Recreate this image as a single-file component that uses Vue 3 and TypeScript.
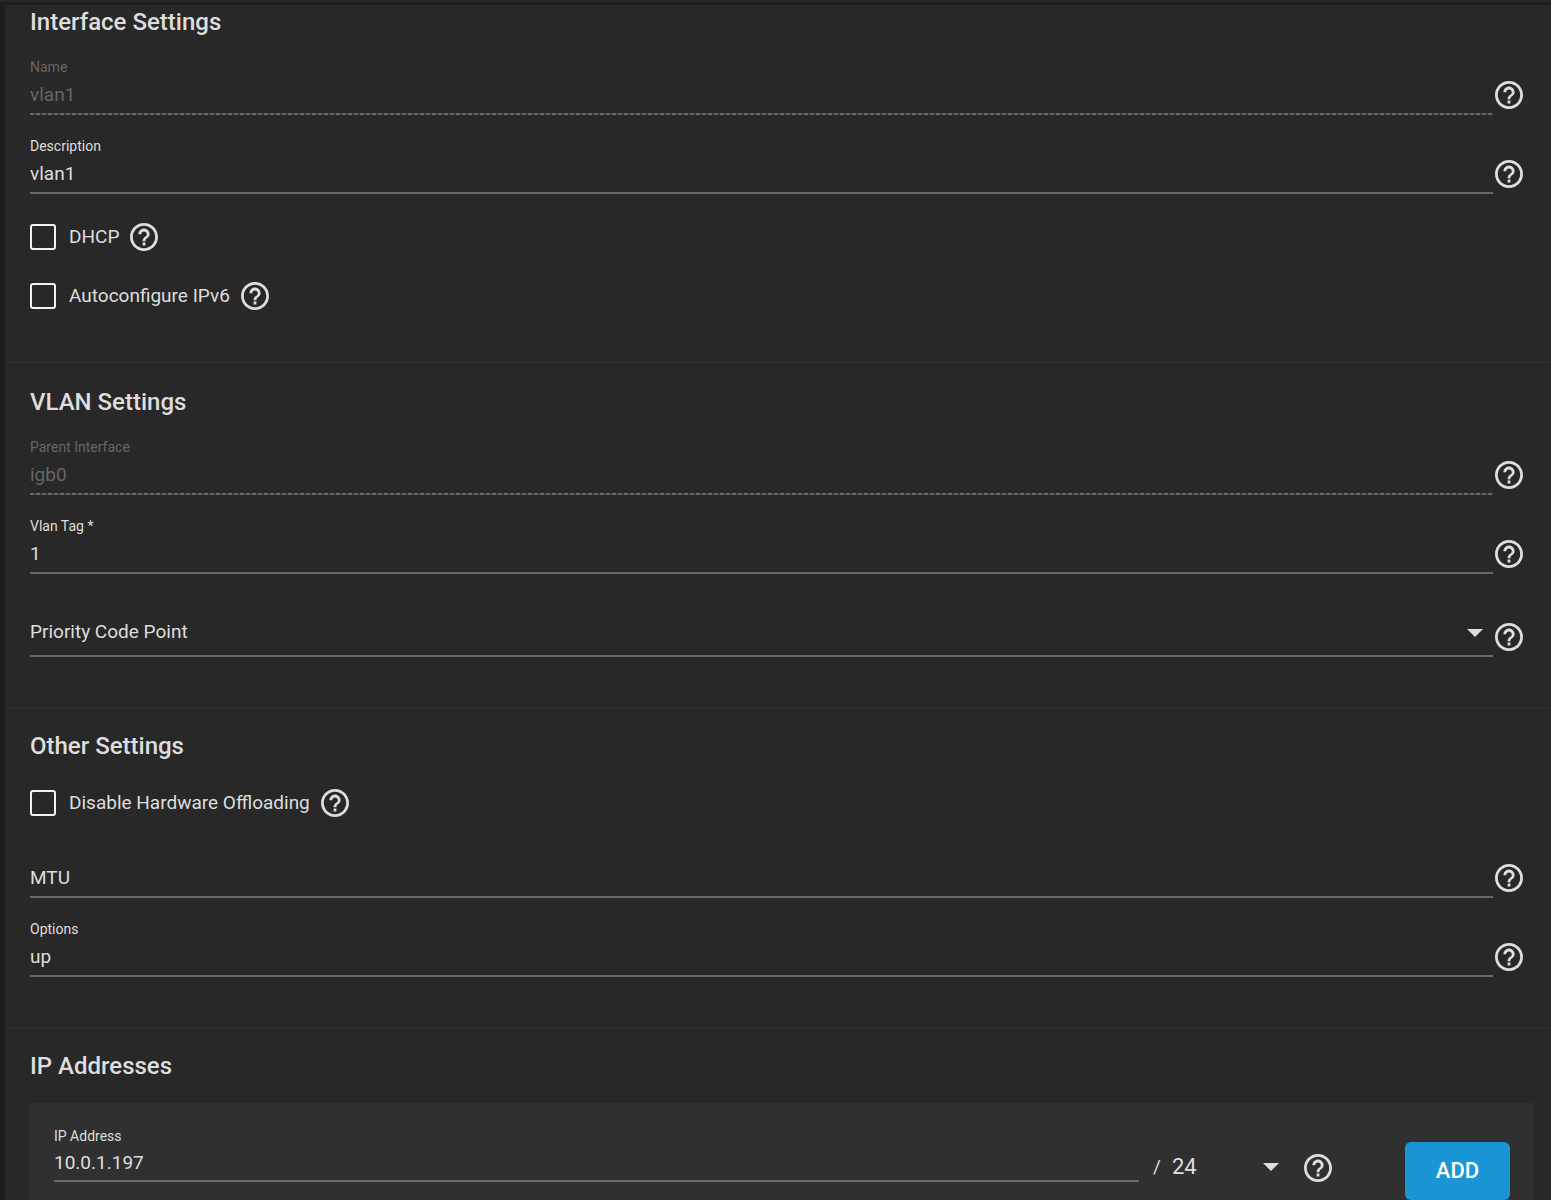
<script setup lang="ts">
import { defineComponent, h, reactive } from 'vue'

const HelpIcon = defineComponent({
  setup() {
    return () =>
      h('button', { type: 'button', class: 'help', 'aria-label': 'Help' }, [
        h('svg', { viewBox: '2 2 20 20', 'aria-hidden': 'true' }, [
          h('path', {
            d: 'M11 18h2v-2h-2v2zm1-16C6.48 2 2 6.48 2 12s4.48 10 10 10 10-4.48 10-10S17.52 2 12 2zm0 18c-4.41 0-8-3.59-8-8s3.59-8 8-8 8 3.59 8 8-3.59 8-8 8zm0-14c-2.21 0-4 1.79-4 4h2c0-1.1.9-2 2-2s2 .9 2 2c0 2-3 1.75-3 5h2c0-2.25 3-2.5 3-5 0-2.21-1.79-4-4-4z',
          }),
        ]),
      ])
  },
})

const form = reactive({
  name: 'vlan1',
  description: 'vlan1',
  dhcp: false,
  autoconf: false,
  parent: 'igb0',
  tag: '1',
  pcp: '',
  offload: false,
  mtu: '',
  options: 'up',
  address: '10.0.1.197',
  netmask: '24',
})

const netmasks: string[] = Array.from({ length: 32 }, (_, i) => String(i + 1))
const priorities: string[] = ['Best effort', 'Background', 'Excellent effort', 'Critical applications']
</script>

<template>
  <form class="page" @submit.prevent>
    <div class="panel">
      <section class="first">
        <h2>Interface Settings</h2>
        <div class="row">
          <div class="field disabled">
            <label for="name">Name</label>
            <input id="name" v-model="form.name" type="text" disabled />
          </div>
          <HelpIcon />
        </div>
        <div class="row">
          <div class="field">
            <label for="description">Description</label>
            <input id="description" v-model="form.description" type="text" />
          </div>
          <HelpIcon />
        </div>
        <div class="check">
          <label><input v-model="form.dhcp" type="checkbox" />DHCP</label>
          <HelpIcon />
        </div>
        <div class="check">
          <label><input v-model="form.autoconf" type="checkbox" />Autoconfigure IPv6</label>
          <HelpIcon />
        </div>
      </section>

      <section class="vlan">
        <h2>VLAN Settings</h2>
        <div class="row">
          <div class="field disabled">
            <label for="parent">Parent Interface</label>
            <input id="parent" v-model="form.parent" type="text" disabled />
          </div>
          <HelpIcon />
        </div>
        <div class="row">
          <div class="field">
            <label for="tag">Vlan Tag *</label>
            <input id="tag" v-model="form.tag" type="text" required />
          </div>
          <HelpIcon />
        </div>
        <div class="row">
          <div class="field choice">
            <select id="pcp" v-model="form.pcp" aria-label="Priority Code Point">
              <option value="">Priority Code Point</option>
              <option v-for="p in priorities" :key="p" :value="p">{{ p }}</option>
            </select>
            <svg class="arrow" viewBox="0 0 16 8" aria-hidden="true"><path d="M0 0h16L8 8z" /></svg>
          </div>
          <HelpIcon />
        </div>
      </section>

      <section>
        <h2>Other Settings</h2>
        <div class="check">
          <label><input v-model="form.offload" type="checkbox" />Disable Hardware Offloading</label>
          <HelpIcon />
        </div>
        <div class="row">
          <div class="field bare">
            <input id="mtu" v-model="form.mtu" type="text" placeholder="MTU" aria-label="MTU" />
          </div>
          <HelpIcon />
        </div>
        <div class="row">
          <div class="field">
            <label for="options">Options</label>
            <input id="options" v-model="form.options" type="text" />
          </div>
          <HelpIcon />
        </div>
      </section>

      <section class="addresses">
        <h2>IP Addresses</h2>
        <div class="box">
          <div class="field address">
            <label for="address">IP Address</label>
            <input id="address" v-model="form.address" type="text" />
          </div>
          <span class="slash">/</span>
          <div class="mask">
            <select v-model="form.netmask" aria-label="Netmask">
              <option v-for="n in netmasks" :key="n" :value="n">{{ n }}</option>
            </select>
            <svg class="arrow" viewBox="0 0 16 8" aria-hidden="true"><path d="M0 0h16L8 8z" /></svg>
          </div>
          <HelpIcon />
          <button type="button" class="add">ADD</button>
        </div>
      </section>
    </div>
  </form>
</template>

<style>
body {
  margin: 0;
  background: #1e1e1e;
}
</style>

<style scoped>
.page {
  box-sizing: border-box;
  min-height: 100vh;
  padding: 3px 0 0 5px;
  border-top: 2px solid #282828;
  background: #1e1e1e;
  color: #dedede;
  font: 19px/28px Roboto, sans-serif;
}
.page * {
  box-sizing: border-box;
}
.panel {
  background: #282828;
}
section {
  padding: 23px 28px 51px 25px;
  border-bottom: 1px solid #323232;
}
.first {
  padding-top: 3px;
  padding-bottom: 50px;
}
.vlan {
  padding-top: 25px;
}
.addresses {
  padding-right: 18px;
  padding-bottom: 0;
  border: 0;
}
h2 {
  margin: 0;
  font-size: 24px;
  line-height: 28px;
  font-weight: 500;
}
.row {
  display: flex;
  align-items: flex-end;
  gap: 2px;
}
.field {
  display: flex;
  flex: 1;
  flex-direction: column;
  gap: 5px;
  padding: 22px 0 4px;
  border-bottom: 2px solid #686868;
}
.field label {
  font-size: 14px;
  line-height: 18px;
}
input[type='text'],
select {
  display: block;
  width: 100%;
  height: 28px;
  margin: 0;
  padding: 0;
  border: 0;
  border-radius: 0;
  outline: 0;
  background: transparent;
  color: inherit;
  font: inherit;
  appearance: none;
}
input::placeholder {
  color: inherit;
  opacity: 1;
}
.disabled {
  padding-bottom: 6px;
  background: repeating-linear-gradient(90deg, #686868 0 4px, #3c3c3c 4px 6px) bottom / 100% 2px no-repeat;
  border-bottom: 0;
  color: #666;
}
.bare {
  padding-top: 45px;
}
.choice {
  position: relative;
  padding: 44px 0 9px;
}
.arrow {
  flex: none;
  width: 16px;
  height: 8px;
  fill: #dedede;
  pointer-events: none;
}
.choice .arrow {
  position: absolute;
  right: 10px;
  bottom: 18px;
}
:deep(.help) {
  display: block;
  flex: none;
  width: 28px;
  height: 28px;
  margin: 0;
  padding: 0;
  border: 0;
  background: none;
}
.row :deep(.help) {
  margin-bottom: 6px;
}
:deep(.help svg) {
  display: block;
  width: 28px;
  height: 28px;
  fill: #dedede;
}
.check {
  display: flex;
  align-items: center;
  gap: 11px;
  height: 32px;
  margin-top: 27px;
}
.check label {
  display: flex;
  align-items: center;
  gap: 13px;
}
input[type='checkbox'] {
  width: 26px;
  height: 26px;
  margin: 0;
  border: 2px solid #f2f2f2;
  border-radius: 3px;
  appearance: none;
}
input[type='checkbox']:checked {
  background: #1a95d5;
}
.box {
  display: flex;
  align-items: flex-start;
  margin-top: 23px;
  padding: 0 23px 0 24px;
  background: #303030;
}
.address {
  gap: 4px;
  padding: 24px 0 3px;
}
.slash {
  width: 33px;
  padding: 50px 0 0 14px;
}
.mask {
  display: flex;
  align-items: center;
  width: 107px;
  margin: 50px 25px 0 0;
  font-size: 22px;
}
.mask select {
  flex: 1;
  min-width: 0;
}
.box :deep(.help) {
  margin: 51px 73px 0 0;
}
.add {
  width: 105px;
  height: 58px;
  margin: 39px 0 0;
  border: 0;
  border-radius: 6px;
  background: #1a95d5;
  color: #fff;
  font: 500 22px/28px Roboto, sans-serif;
}
</style>
